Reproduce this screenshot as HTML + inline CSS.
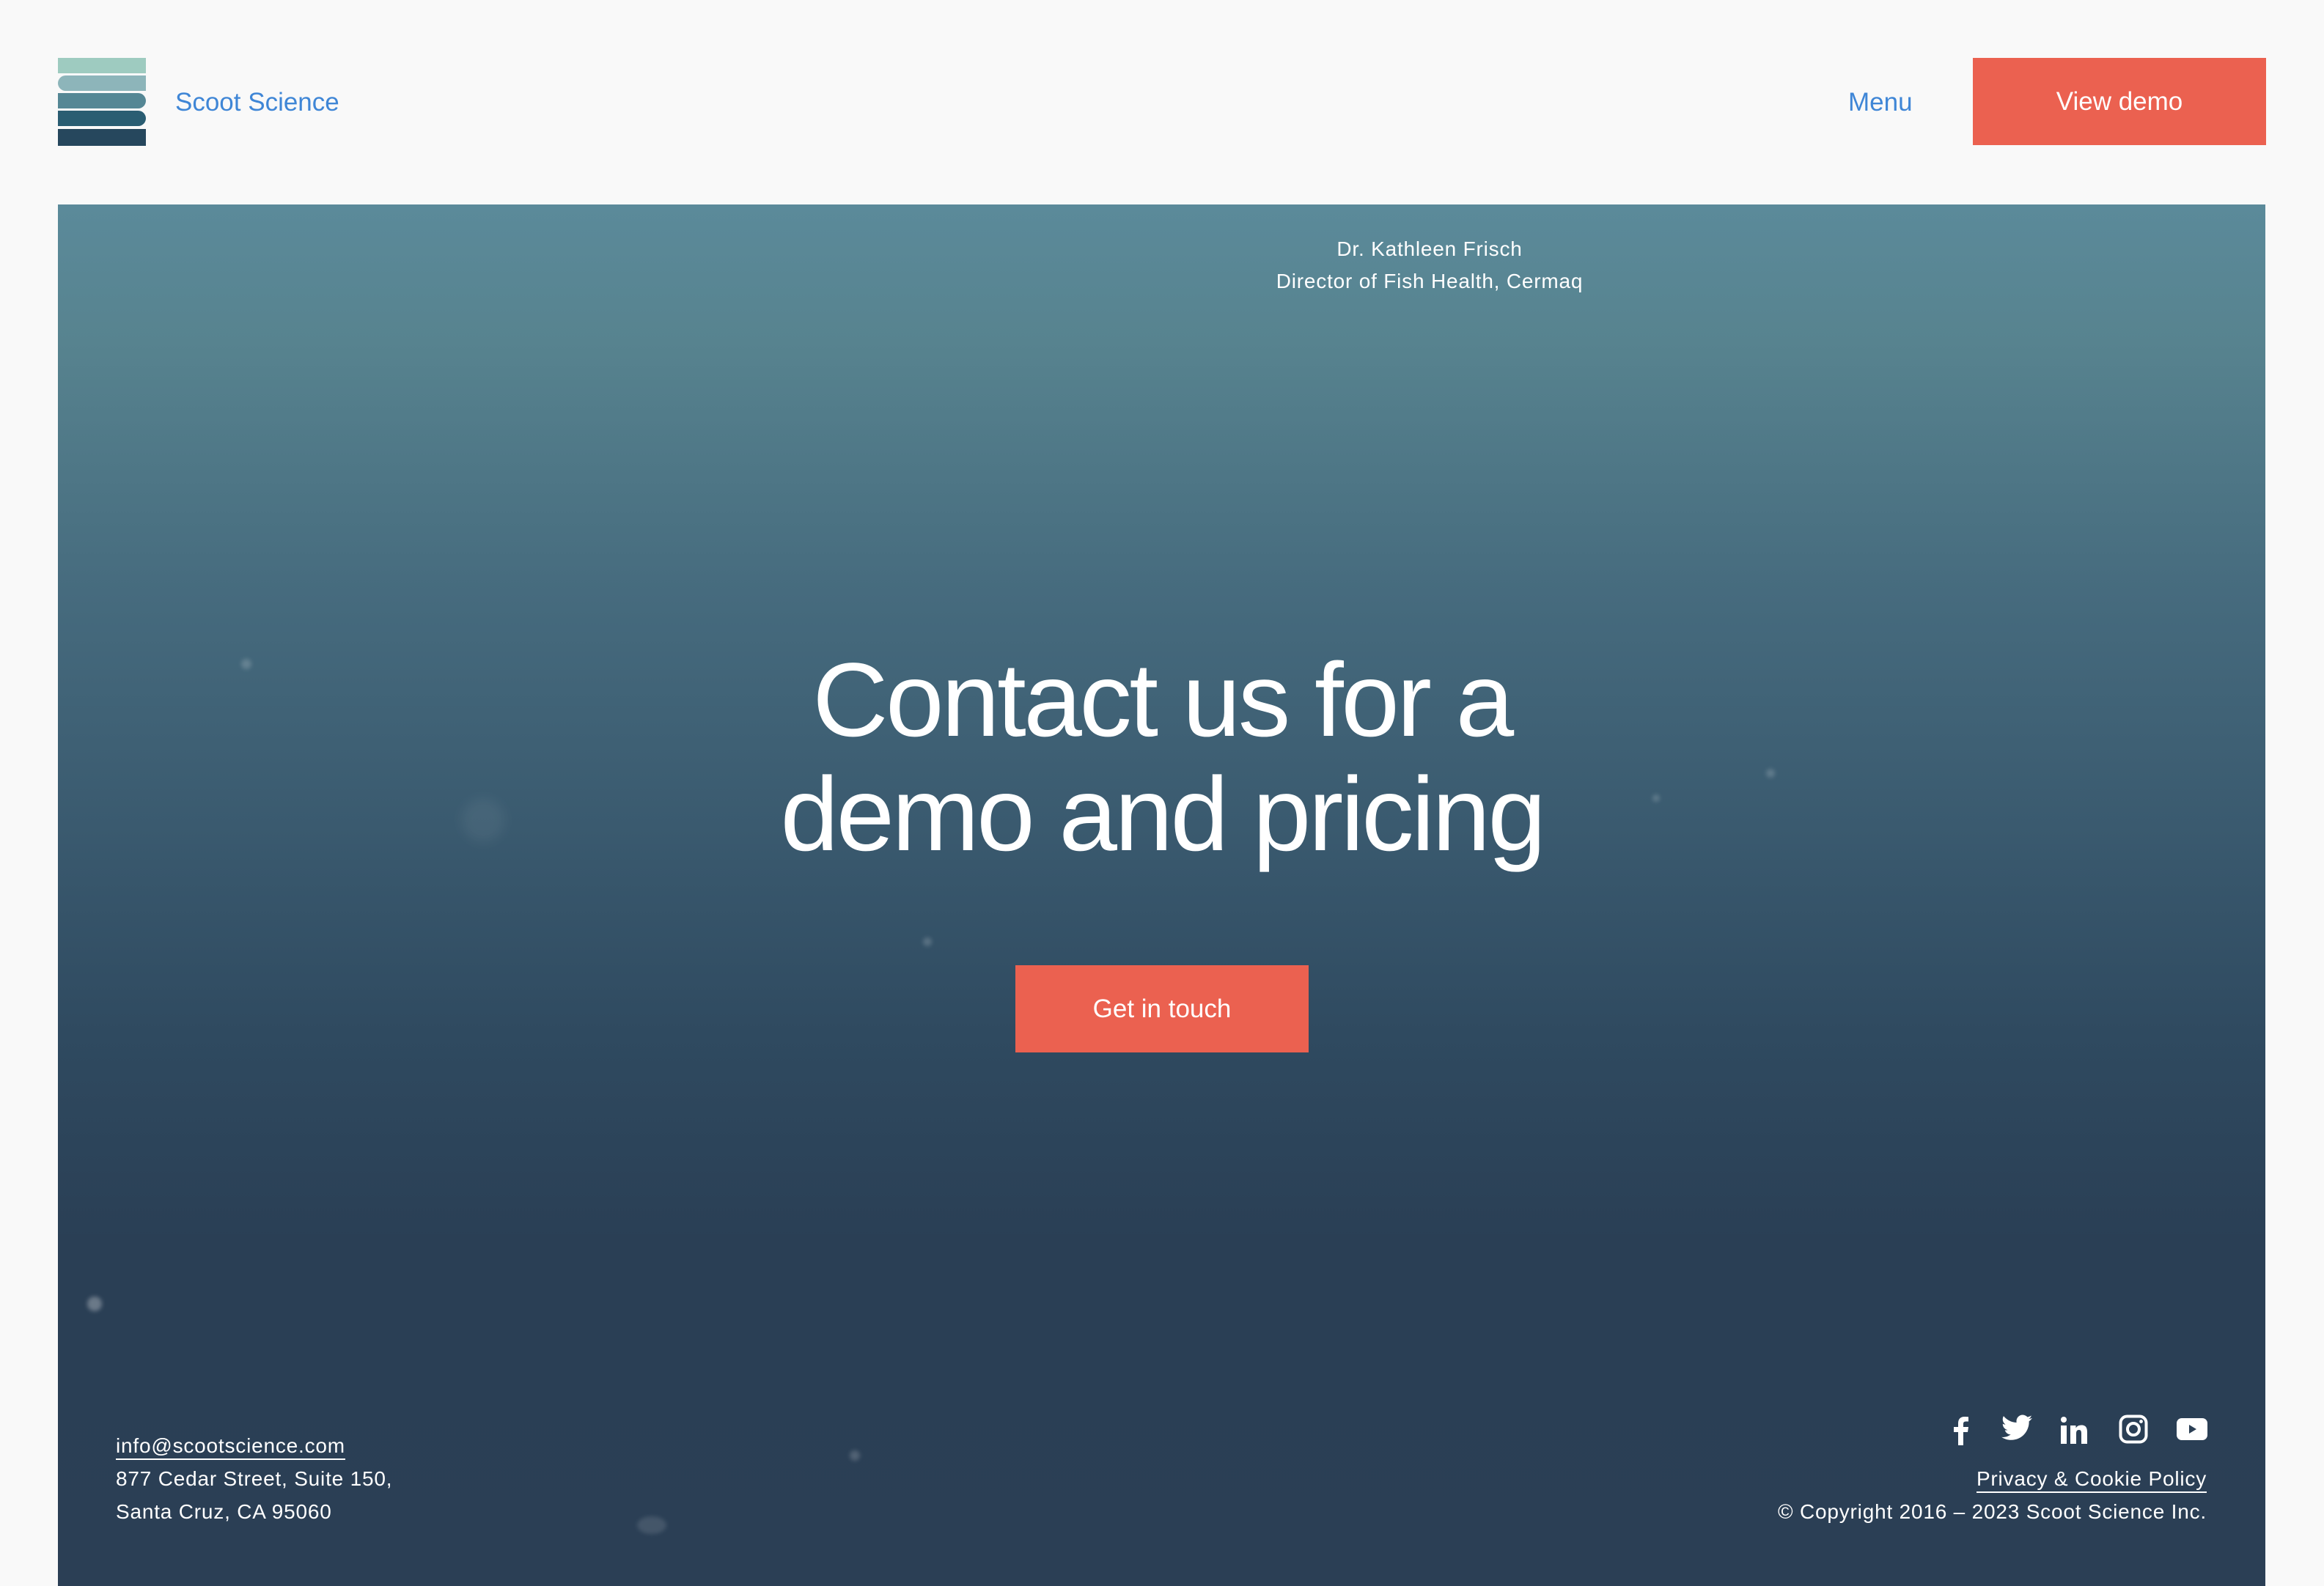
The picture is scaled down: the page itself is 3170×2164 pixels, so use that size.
<!DOCTYPE html>
<html><head><meta charset="utf-8">
<style>
*{margin:0;padding:0;box-sizing:border-box}
html,body{width:3170px;height:2164px;overflow:hidden;background:#f9f9f9;font-family:"Liberation Sans",sans-serif}
.logo{position:absolute;left:79px;top:79px;width:120px;height:120px}
.logo div{position:absolute;left:0;width:120px;height:22px}
.brand{position:absolute;left:239px;top:120px;font-size:35px;color:#3f86d6}
.menu{position:absolute;left:2521px;top:120px;font-size:35px;color:#3f86d6}
.demo{position:absolute;left:2691px;top:79px;width:400px;height:119px;background:#eb6150;color:#fff;font-size:35px;display:flex;align-items:center;justify-content:center}
.hero{position:absolute;left:79px;top:279px;width:3011px;height:1885px;overflow:hidden;
background:linear-gradient(180deg,#5b8a9a 0%,#57838f 10%,#466b7e 28%,#3a5a6f 45%,#2f4a60 60%,#2a3f55 75%,#2b3f55 100%)}
.quote{position:absolute;left:1500px;width:900px;top:318px;text-align:center;color:#fff;font-size:28px;line-height:44px;letter-spacing:0.8px}
h1{position:absolute;left:0;width:3170px;top:878px;text-align:center;color:#fff;font-weight:normal;font-size:143px;line-height:156px;letter-spacing:-3.5px}
.cta{position:absolute;left:1385px;top:1317px;width:400px;height:119px;background:#eb6150;color:#fff;font-size:35px;display:flex;align-items:center;justify-content:center}
.fl{position:absolute;left:158px;top:1950px;color:#fff;font-size:28px;line-height:45px;letter-spacing:0.8px}
.fr{position:absolute;right:160px;top:1995px;color:#fff;font-size:28px;line-height:45px;letter-spacing:0.8px;text-align:right}
u{text-decoration:none;border-bottom:2px solid #fff;padding-bottom:2px}
.icons{position:absolute;top:1930px;left:2650px}
.icons svg{position:absolute;top:0}
.b{position:absolute;border-radius:50%;background:rgba(255,255,255,.18);filter:blur(3px)}
</style></head><body>
<div class="logo">
<div style="top:0;height:21px;background:#9ecbc0"></div>
<div style="top:24px;height:21px;background:#8db5ba;border-radius:24px 0 0 24px"></div>
<div style="top:48px;height:21px;background:#558795;border-radius:0 24px 24px 0"></div>
<div style="top:72px;height:21px;background:#2a5d72;border-radius:0 24px 24px 0"></div>
<div style="top:97px;height:23px;background:#26475d"></div>
</div>
<div class="brand">Scoot Science</div>
<div class="menu">Menu</div>
<div class="demo">View demo</div>
<div class="hero">
<div class="b" style="left:250px;top:620px;width:14px;height:14px"></div>
<div class="b" style="left:550px;top:810px;width:60px;height:60px;background:rgba(255,255,255,.06);filter:blur(8px)"></div>
<div class="b" style="left:2330px;top:770px;width:12px;height:12px"></div>
<div class="b" style="left:2175px;top:805px;width:10px;height:10px"></div>
<div class="b" style="left:40px;top:1490px;width:20px;height:20px;background:rgba(255,255,255,.3)"></div>
<div class="b" style="left:1080px;top:1700px;width:14px;height:14px"></div>
<div class="b" style="left:790px;top:1790px;width:40px;height:24px;background:rgba(255,255,255,.12)"></div>
<div class="b" style="left:1180px;top:1000px;width:12px;height:12px"></div>
</div>
<div class="quote">Dr. Kathleen Frisch<br>Director of Fish Health, Cermaq</div>
<h1>Contact us for a<br>demo and pricing</h1>
<div class="cta">Get in touch</div>
<div class="fl"><u>info@scootscience.com</u><br>877 Cedar Street, Suite 150,<br>Santa Cruz, CA 95060</div>
<div class="icons">
<svg style="left:10px" width="28" height="42" viewBox="0 0 28 42"><path fill="#fff" d="M18 42V24h6l1-7h-7v-4c0-2 .6-3.5 3.6-3.5H25V3.3C24.3 3.2 22 3 19.6 3 14 3 11 6.3 11 12v5H5v7h6v18z"/></svg>
<svg style="left:80px" width="42" height="36" viewBox="0 0 24 20"><path fill="#fff" d="M24 2.4c-.9.4-1.8.6-2.8.8 1-.6 1.800-1.600 2.200-2.700-1 .6-2 1-3.100 1.200C19.300.700 18 0 16.600 0c-2.700 0-4.900 2.200-4.900 4.900 0 .4 0 .8.1 1.100C7.700 5.800 4.100 3.900 1.700.9c-.4.7-.7 1.600-.7 2.500 0 1.700.9 3.200 2.200 4.100-.8 0-1.600-.2-2.200-.6v.1c0 2.400 1.700 4.400 3.900 4.800-.4.1-.8.2-1.300.2-.3 0-.6 0-.9-.1.6 2 2.400 3.400 4.600 3.400-1.700 1.300-3.800 2.100-6.100 2.100-.4 0-.8 0-1.200-.1C2.200 18.800 4.800 19.600 7.500 19.600c9.100 0 14-7.500 14-14v-.6c1-.7 1.800-1.600 2.500-2.600z"/></svg>
<svg style="left:160px;top:2px" width="40" height="40" viewBox="0 0 40 40"><circle cx="5" cy="5" r="4" fill="#fff"/><rect x="1" y="13" width="8" height="25" fill="#fff"/><path fill="#fff" d="M14 13h7.5v3.5c1.2-2.2 3.8-4 7.5-4 6.5 0 8 4 8 9.5V38h-8V24c0-3-.5-5-3.3-5s-3.7 2-3.7 5v14h-8z"/></svg>
<svg style="left:240px" width="40" height="40" viewBox="0 0 40 40"><rect x="2.5" y="2.5" width="35" height="35" rx="9" fill="none" stroke="#fff" stroke-width="4"/><circle cx="20" cy="20" r="8" fill="none" stroke="#fff" stroke-width="4"/><circle cx="30.5" cy="9.5" r="2.4" fill="#fff"/></svg>
<svg style="left:319px;top:5px" width="42" height="30" viewBox="0 0 42 30"><rect x="0" y="0" width="42" height="30" rx="7" fill="#fff"/><path fill="#2b3f55" d="M17 9v12l10-6z"/></svg>
</div>
<div class="fr"><u>Privacy &amp; Cookie Policy</u><br>© Copyright 2016 – 2023 Scoot Science Inc.</div>
</body></html>
